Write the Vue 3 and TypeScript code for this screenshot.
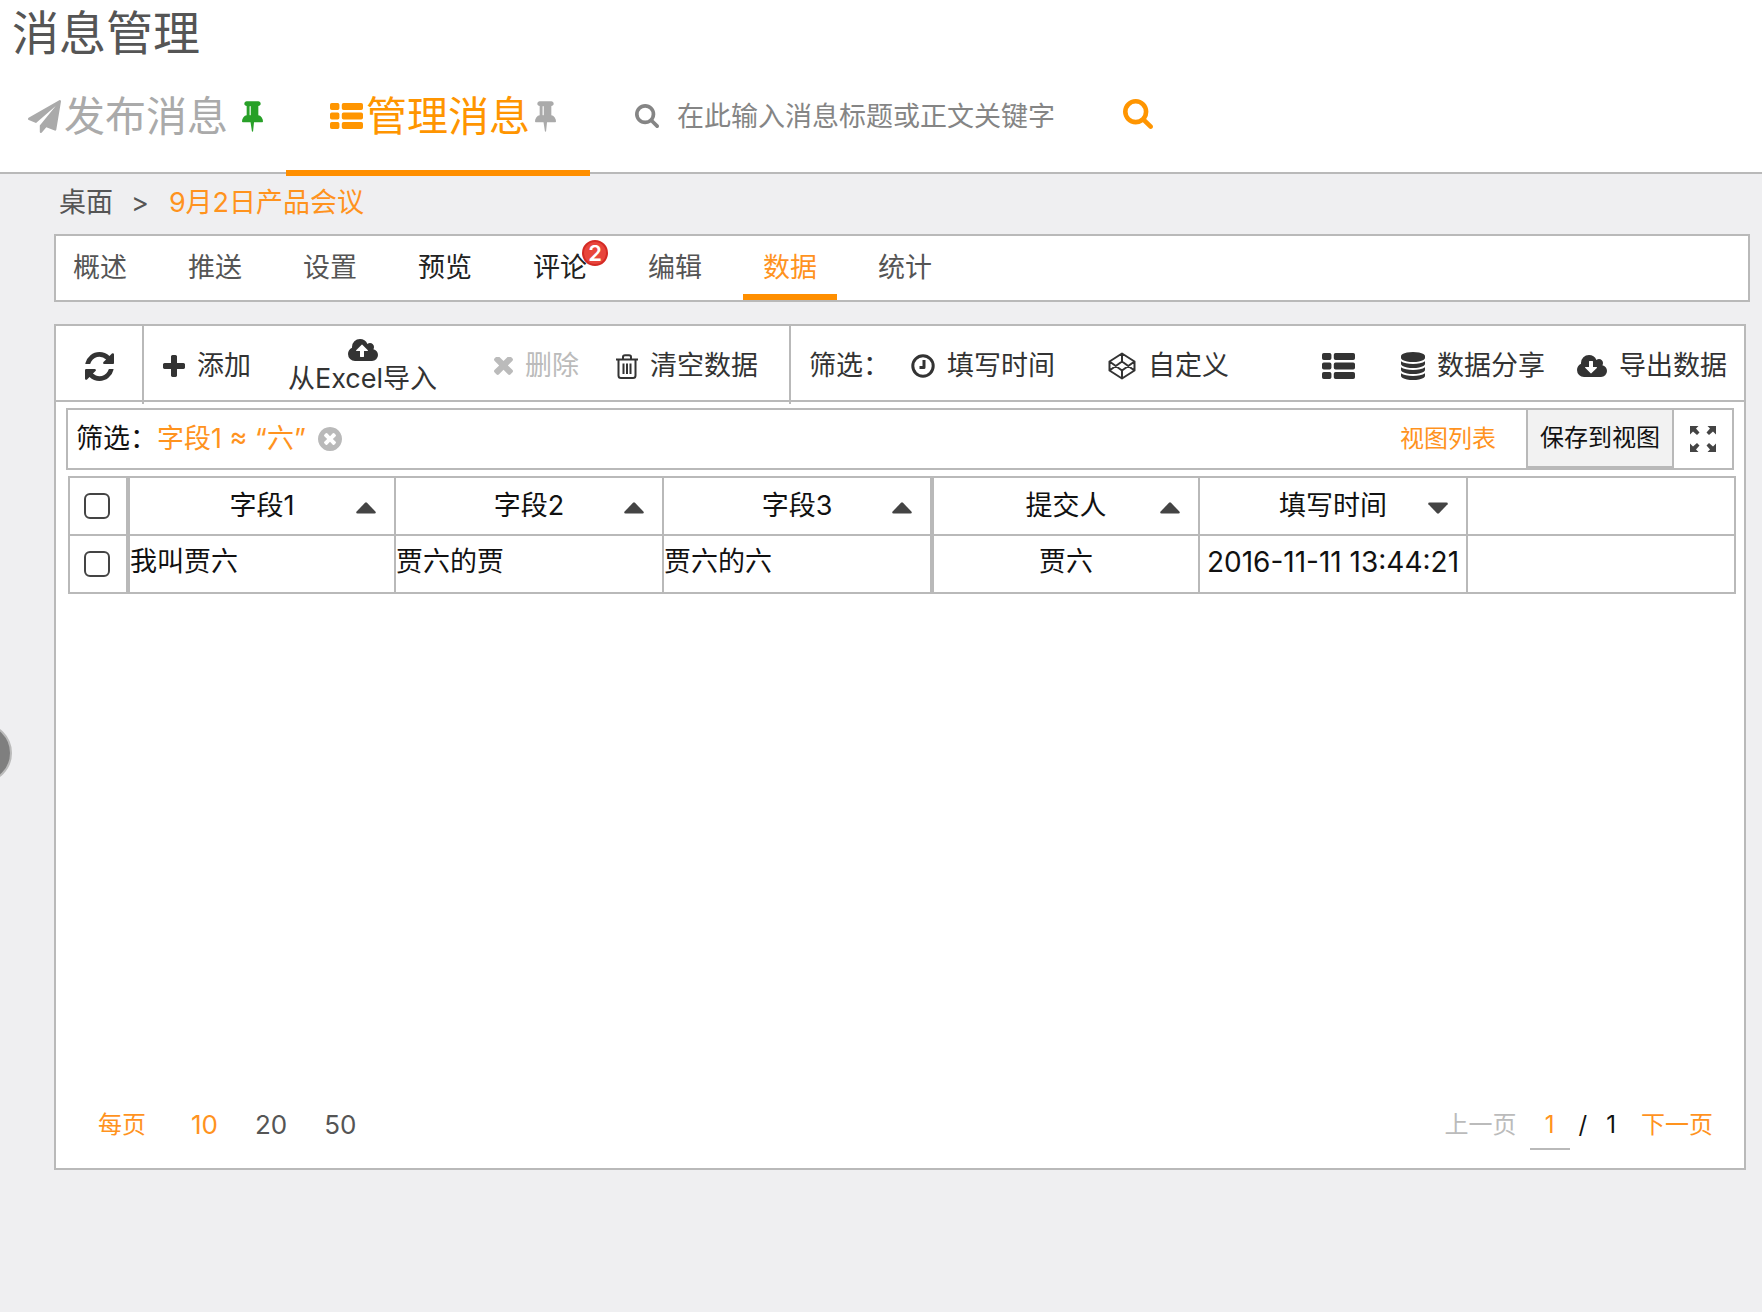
<script setup lang="ts">
import { h, ref, type FunctionalComponent } from 'vue'

interface Glyph {
  box: string
  d: string
  stroke?: number
}

const CLOUD =
  'M1856 1152q0 159-112.5 271.5t-271.5 112.5h-1088q-185 0-316.5-131.5t-131.5-316.5q0-130 70-240t188-165q-2-30-2-43 0-212 150-362t362-150q156 0 285.5 87t188.5 231q71-62 166-62 106 0 181 75t75 181q0 76-41 138 130 31 213.5 135.5t83.5 238.5z'

const glyphs: Record<string, Glyph> = {
  plane: {
    box: '0 0 1792 1792',
    d: 'M1764 11q33 24 27 64l-256 1536q-5 29-32 45-14 8-31 8-11 0-24-5l-453-185-242 295q-18 23-49 23-13 0-22-4-19-7-30.5-23.5t-11.5-36.5v-349l864-1059-1069 925-395-162q-37-14-40-55-2-40 32-59l1664-960q15-9 32-9 20 0 36 11z',
  },
  pin: {
    box: '320 128 1152 1664',
    d: 'M800 864v-448q0-14-9-23t-23-9-23 9-9 23v448q0 14 9 23t23 9 23-9 9-23zm672 352q0 26-19 45t-45 19h-429l-51 483q-2 12-10.5 20.5t-20.5 8.5h-1q-27 0-32-27l-76-485h-404q-26 0-45-19t-19-45q0-123 78.5-221.5t177.5-98.5v-512q-52 0-90-38t-38-90 38-90 90-38h640q52 0 90 38t38 90-38 90-90 38v512q99 0 177.5 98.5t78.5 221.5z',
  },
  list: {
    box: '0 128 1792 1408',
    d: 'M96 128h320a96 96 0 0 1 96 96v192a96 96 0 0 1-96 96H96a96 96 0 0 1-96-96V224a96 96 0 0 1 96-96zM96 640h320a96 96 0 0 1 96 96v192a96 96 0 0 1-96 96H96a96 96 0 0 1-96-96V736a96 96 0 0 1 96-96zM96 1152h320a96 96 0 0 1 96 96v192a96 96 0 0 1-96 96H96a96 96 0 0 1-96-96v-192a96 96 0 0 1 96-96zM736 128h960a96 96 0 0 1 96 96v192a96 96 0 0 1-96 96H736a96 96 0 0 1-96-96V224a96 96 0 0 1 96-96zM736 640h960a96 96 0 0 1 96 96v192a96 96 0 0 1-96 96H736a96 96 0 0 1-96-96V736a96 96 0 0 1 96-96zM736 1152h960a96 96 0 0 1 96 96v192a96 96 0 0 1-96 96H736a96 96 0 0 1-96-96v-192a96 96 0 0 1 96-96z',
  },
  search: {
    box: '64 128 1664 1664',
    d: 'M1216 832q0-185-131.5-316.5t-316.5-131.5-316.5 131.5-131.5 316.5 131.5 316.5 316.5 131.5 316.5-131.5 131.5-316.5zm512 832q0 52-38 90t-90 38q-54 0-90-38l-343-342q-179 124-399 124-143 0-273.5-55.5t-225-150-150-225-55.5-273.5 55.5-273.5 150-225 225-150 273.5-55.5 273.5 55.5 225 150 150 225 55.5 273.5q0 220-124 399l343 343q37 37 37 90z',
  },
  refresh: {
    box: '128 128 1536 1536',
    d: 'M1639 1056q0 5-1 7-64 268-268 434.5t-478 166.5q-146 0-282.5-55t-243.5-157l-129 129q-19 19-45 19t-45-19-19-45v-448q0-26 19-45t45-19h448q26 0 45 19t19 45-19 45l-137 137q71 66 161 102t187 36q134 0 250-65t186-179q11-17 53-117 8-23 30-23h192q13 0 22.5 9.5t9.5 22.5zm25-800v448q0 26-19 45t-45 19h-448q-26 0-45-19t-19-45 19-45l138-138q-148-137-349-137-134 0-250 65t-186 179q-11 17-53 117-8 23-30 23h-199q-13 0-22.5-9.5t-9.5-22.5v-7q65-268 270-434.5t480-166.5q146 0 284 55.5t245 156.5l130-129q19-19 45-19t45 19 19 45z',
  },
  plus: {
    box: '192 128 1408 1408',
    d: 'M1600 736v192q0 40-28 68t-68 28h-416v416q0 40-28 68t-68 28h-192q-40 0-68-28t-28-68v-416h-416q-40 0-68-28t-28-68v-192q0-40 28-68t68-28h416v-416q0-40 28-68t68-28h192q40 0 68 28t28 68v416h416q40 0 68 28t28 68z',
  },
  upload: {
    box: '-64 128 1920 1408',
    d: CLOUD + 'M1216 864q0-14-9-23l-352-352q-9-9-23-9t-23 9l-351 351q-10 12-10 24 0 14 9 23t23 9h224v352q0 13 9.5 22.5t22.5 9.5h192q13 0 22.5-9.5t9.5-22.5v-352h224q13 0 22.5-9.5t9.5-22.5z',
  },
  download: {
    box: '-64 128 1920 1408',
    d: CLOUD + 'M1216 928q0-14-9-23t-23-9h-224v-352q0-13-9.5-22.5t-22.5-9.5h-192q-13 0-22.5 9.5t-9.5 22.5v352h-224q-13 0-22.5 9.5t-9.5 22.5q0 14 9 23l352 352q9 9 23 9t23-9l351-351q10-12 10-24z',
  },
  times: {
    box: '302 434 1188 1188',
    d: 'M1490 1322q0 40-28 68l-136 136q-28 28-68 28t-68-28l-294-294-294 294q-28 28-68 28t-68-28l-136-136q-28-28-28-68t28-68l294-294-294-294q-28-28-28-68t28-68l136-136q28-28 68-28t68 28l294 294 294-294q28-28 68-28t68 28l136 136q28 28 28 68t-28 68l-294 294 294 294q28 28 28 68z',
  },
  remove: {
    box: '128 128 1536 1536',
    d: 'M1277 1122q0-26-19-45l-181-181 181-181q19-19 19-45 0-27-19-46l-90-90q-19-19-46-19-26 0-45 19l-181 181-181-181q-19-19-45-19-27 0-46 19l-90 90q-19 19-19 46 0 26 19 45l181 181-181 181q-19 19-19 45 0 27 19 46l90 90q19 19 46 19 26 0 45-19l181-181 181 181q19 19 45 19 27 0 46-19l90-90q19-19 19-46zm387-226q0 209-103 385.5t-279.5 279.5-385.5 103-385.5-103-279.5-279.5-103-385.5 103-385.5 279.5-279.5 385.5-103 385.5 103 279.5 279.5 103 385.5z',
  },
  database: {
    box: '128 0 1536 1792',
    d: 'M896 768q237 0 443-43t325-127v170q0 69-103 128t-280 93.5-385 34.5-385-34.5-280-93.5-103-128v-170q119 84 325 127t443 43zm0 768q237 0 443-43t325-127v170q0 69-103 128t-280 93.5-385 34.5-385-34.5-280-93.5-103-128v-170q119 84 325 127t443 43zm0-384q237 0 443-43t325-127v170q0 69-103 128t-280 93.5-385 34.5-385-34.5-280-93.5-103-128v-170q119 84 325 127t443 43zm0-1152q208 0 385 34.5t280 93.5 103 128v128q0 69-103 128t-280 93.5-385 34.5-385-34.5-280-93.5-103-128v-128q0-69 103-128t280-93.5 385-34.5z',
  },
  trash: {
    box: '0 0 22 25',
    stroke: 2,
    d: 'M0 5.5H22M7 5V3Q7 1.2 9 1.2H13Q15 1.2 15 3V5M2.5 5.5V21.5Q2.5 24 5 24H17Q19.500 24 19.500 21.500V5.500M7.500 9.500V20M11 9.500V20M14.500 9.500V20',
  },
  clock: {
    box: '0 0 24 24',
    stroke: 3,
    d: 'M12 1.8A10.200 10.200 0 1 1 12 22.200A10.200 10.200 0 1 1 12 1.800M13 6V13.500H8.500',
  },
  codepen: {
    box: '0 0 28 28',
    stroke: 2,
    d: 'M14 1.500L26.500 9.500V18.500L14 26.500L1.500 18.500V9.500ZM14 1.500V9.500M14 18.500V26.500M1.500 9.500L14 18.500L26.500 9.500M1.500 18.500L14 9.500L26.500 18.500',
  },
  expand: {
    box: '0 0 26 26',
    d: 'M0 0H8.500L6 2.500L9.500 6.500L7 9L3 5.500L0 8.500ZM26 0H17.500L20 2.500L16.500 6.500L19 9L23 5.500L26 8.500ZM0 26H8.500L6 23.500L9.500 19.500L7 17L3 20.500L0 17.500ZM26 26H17.500L20 23.500L16.500 19.500L19 17L23 20.500L26 17.500Z',
  },
  up: { box: '0 0 20 12', d: 'M9 .7Q10 0 11 .7L19.600 9.800Q20.300 11.400 18.500 11.500H1.500Q-.3 11.400 .4 9.800Z' },
  down: { box: '0 0 20 12', d: 'M9 11.300Q10 12 11 11.300L19.600 2.200Q20.300 .6 18.500 .5H1.500Q-.3 .6 .4 2.200Z' },
}

const Icon: FunctionalComponent<{ name: string }> = (props) => {
  const g = glyphs[props.name]
  return h('svg', { viewBox: g.box, 'aria-hidden': 'true' }, [
    h('path', {
      d: g.d,
      'fill-rule': 'evenodd',
      fill: g.stroke ? 'none' : 'currentColor',
      stroke: g.stroke ? 'currentColor' : 'none',
      'stroke-width': g.stroke ?? 0,
      'stroke-linejoin': 'round',
    }),
  ])
}
Icon.props = ['name']

interface Tab {
  label: string
  dark?: boolean
  badge?: number
}

const tabs: Tab[] = [
  { label: '概述' },
  { label: '推送' },
  { label: '设置' },
  { label: '预览', dark: true },
  { label: '评论', dark: true, badge: 2 },
  { label: '编辑' },
  { label: '数据' },
  { label: '统计' },
]
const activeTab = ref('数据')

const columns = [
  { label: '字段1', sort: 'up', cls: 'thick' },
  { label: '字段2', sort: 'up', cls: '' },
  { label: '字段3', sort: 'up', cls: '' },
  { label: '提交人', sort: 'up', cls: 'thick' },
  { label: '填写时间', sort: 'down', cls: 'time' },
]
const rows = [['我叫贾六', '贾六的贾', '贾六的六', '贾六', '2016-11-11 13:44:21']]

const pageSizes = [10, 20, 50]
const pageSize = ref(10)
const page = ref('1')
const keyword = ref('')
</script>

<template>
  <div class="page">
    <header class="top">
      <h1>消息管理</h1>
      <div class="nav">
        <a href="#" class="main-tab publish"><Icon name="plane" class="i-33" />发布消息<Icon name="pin" class="i-pin green" /></a>
        <a href="#" class="main-tab manage"><Icon name="list" class="i-list" />管理消息<Icon name="pin" class="i-pin grey" /></a>
        <form class="search" @submit.prevent>
          <label for="kw" aria-label="搜索"><Icon name="search" class="i-24" /></label>
          <input id="kw" v-model="keyword" type="text" placeholder="在此输入消息标题或正文关键字" />
          <button type="submit" aria-label="搜索" class="go"><Icon name="search" class="i-30" /></button>
        </form>
      </div>
    </header>

    <button class="handle" aria-label="展开侧栏"></button>

    <main>
      <nav class="crumbs">
        <a href="#">桌面</a><span class="sep">&gt;</span><a href="#" class="orange">9月2日产品会议</a>
      </nav>

      <nav class="tabs">
        <button
          v-for="t in tabs"
          :key="t.label"
          :class="{ dark: t.dark, active: t.label === activeTab }"
          @click="activeTab = t.label"
        >
          {{ t.label }}<span v-if="t.badge" class="badge">{{ t.badge }}</span>
        </button>
      </nav>

      <section class="panel">
        <div class="toolbar">
          <div class="group refresh">
            <button aria-label="刷新"><Icon name="refresh" class="i-29" /></button>
          </div>
          <div class="group actions">
            <button><Icon name="plus" class="i-22" />添加</button>
            <button class="stacked"><Icon name="upload" class="i-cloud" />从Excel导入</button>
            <button class="off" disabled><Icon name="times" class="i-19" />删除</button>
            <button><Icon name="trash" class="i-trash" />清空数据</button>
          </div>
          <div class="group filters">
            <span>筛选：</span>
            <button><Icon name="clock" class="i-24" />填写时间</button>
            <button class="custom"><Icon name="codepen" class="i-28" />自定义</button>
          </div>
          <div class="group exports">
            <button class="view" aria-label="列表视图"><Icon name="list" class="i-list" /></button>
            <button><Icon name="database" class="i-db" />数据分享</button>
            <button><Icon name="download" class="i-cloud" />导出数据</button>
          </div>
        </div>

        <div class="filterbar">
          <span>筛选：</span>
          <span class="orange term">字段1 ≈ “六”</span>
          <button class="clear" aria-label="移除筛选"><Icon name="remove" class="i-24" /></button>
          <a href="#" class="orange views">视图列表</a>
          <button class="save">保存到视图</button>
          <button class="full" aria-label="全屏"><Icon name="expand" class="i-26" /></button>
        </div>

        <div class="grid">
          <table>
            <colgroup>
              <col class="c-check" />
              <col v-for="c in columns" :key="c.label" />
              <col />
            </colgroup>
            <thead>
              <tr>
                <th class="check"><input type="checkbox" aria-label="全选" /></th>
                <th v-for="c in columns" :key="c.label" :class="c.cls">
                  <div class="head">
                    <span>{{ c.label }}</span>
                    <button :aria-label="'按' + c.label + '排序'"><Icon :name="c.sort" class="i-sort" /></button>
                  </div>
                </th>
                <th></th>
              </tr>
            </thead>
            <tbody>
              <tr v-for="(r, i) in rows" :key="i">
                <td class="check"><input type="checkbox" aria-label="选择此行" /></td>
                <td v-for="(cell, j) in r" :key="j" :class="[columns[j].cls, { mid: j > 2 }]">{{ cell }}</td>
                <td></td>
              </tr>
            </tbody>
          </table>
        </div>

        <footer class="pager">
          <span class="orange per">每页</span>
          <button v-for="s in pageSizes" :key="s" class="size" :class="{ orange: s === pageSize }" @click="pageSize = s">{{ s }}</button>
          <button class="prev" disabled>上一页</button>
          <input v-model="page" type="text" aria-label="页码" />
          <span class="slash">/</span>
          <span class="total">1</span>
          <button class="orange">下一页</button>
        </footer>
      </section>
    </main>
  </div>
</template>

<style>
body {
  margin: 0;
}
</style>

<style scoped>
.page {
  display: flex;
  flex-direction: column;
  min-height: 100vh;
  position: relative;
  overflow: hidden;
  background: #efeff1;
  color: #555;
  font-family: Inter, 'Noto Sans CJK SC', sans-serif;
  font-size: 27px;
  line-height: 40px;
}
.page * {
  box-sizing: border-box;
}
button {
  border: 0;
  padding: 0;
  background: none;
  font: inherit;
  color: inherit;
  cursor: pointer;
  white-space: nowrap;
}
input {
  font: inherit;
}
a {
  color: inherit;
  text-decoration: none;
}
svg {
  display: block;
  flex: none;
}
.orange {
  color: #ff931e;
}

.i-19 { width: 19px; height: 19px; }
.i-22 { width: 22px; height: 22px; }
.i-24 { width: 24px; height: 24px; }
.i-26 { width: 26px; height: 26px; }
.i-28 { width: 28px; height: 28px; }
.i-29 { width: 29px; height: 29px; }
.i-30 { width: 30px; height: 30px; }
.i-33 { width: 33px; height: 33px; }
.i-pin { width: 21px; height: 31px; }
.i-list { width: 33px; height: 26px; }
.i-cloud { width: 30px; height: 22px; }
.i-trash { width: 22px; height: 25px; }
.i-db { width: 24px; height: 28px; }
.i-sort { width: 20px; height: 12px; }

.top {
  background: #fff;
  border-bottom: 2px solid #b9b9b9;
}
h1 {
  margin: 0;
  padding: 0 0 2px 12px;
  font-size: 47px;
  font-weight: 400;
  line-height: 66px;
}
.nav {
  display: flex;
  height: 104px;
}
.main-tab {
  display: flex;
  align-items: center;
  height: 108px;
  padding-bottom: 6px;
  font-size: 41px;
  border-bottom: 6px solid transparent;
}
.publish {
  width: 286px;
  padding-left: 28px;
  gap: 3px;
  color: #aaa;
}
.manage {
  width: 304px;
  padding-left: 44px;
  gap: 3px;
  color: #ff9500;
  border-bottom-color: #ff8f00;
}
.green {
  margin-left: 11px;
  color: #28a028;
}
.grey {
  margin-left: 2px;
  color: #aaa;
}
.search {
  display: flex;
  align-items: center;
  flex: 1;
  height: 94px;
  padding-left: 45px;
  color: #858585;
}
.search input {
  width: 430px;
  margin-left: 18px;
  padding: 4px 0 0;
  border: 0;
  outline: 0;
  background: none;
}
.search input::placeholder {
  color: #858585;
  opacity: 1;
}
.search label {
  padding-top: 2px;
}
.go {
  margin-left: 16px;
  padding-bottom: 2px;
  color: #ff9500;
}

.handle {
  position: absolute;
  left: -48px;
  top: 723px;
  width: 60px;
  height: 60px;
  border: 2px solid #bbb;
  border-radius: 50%;
  background: #7f7f7f;
}

main {
  display: flex;
  flex: 1;
  flex-direction: column;
  padding: 0 16px 142px 54px;
}
.crumbs {
  display: flex;
  align-items: center;
  height: 60px;
  padding: 0 0 2px 5px;
}
.sep {
  margin: 0 20px 0 18px;
}

.tabs {
  display: flex;
  gap: 61px;
  height: 68px;
  margin-right: -4px;
  padding-left: 17px;
  border: 2px solid #b9b9b9;
  background: #fff;
}
.tabs button {
  position: relative;
}
.tabs .dark {
  color: #222;
}
.tabs .active {
  color: #ff931e;
}
.tabs .active::after {
  content: '';
  position: absolute;
  left: -20px;
  right: -20px;
  bottom: 0;
  height: 6px;
  background: #ff8f00;
}
.badge {
  position: absolute;
  left: 49px;
  top: 4px;
  width: 26px;
  height: 26px;
  border: 2px solid #d42a24;
  border-radius: 50%;
  background: #e8453c;
  color: #fff;
  font-size: 22px;
  font-weight: 600;
  line-height: 22px;
}

.panel {
  display: flex;
  flex: 1;
  flex-direction: column;
  margin-top: 22px;
  border: 2px solid #b9b9b9;
  background: #fff;
}
.toolbar {
  display: flex;
  border-bottom: 2px solid #b9b9b9;
  color: #333;
}
.group {
  display: flex;
  align-items: center;
  height: 78px;
  margin-bottom: -4px;
  padding-top: 2px;
}
.group button {
  display: flex;
  align-items: center;
  gap: 12px;
}
.refresh {
  width: 88px;
  justify-content: center;
  border-right: 2px solid #b9b9b9;
}
.actions {
  padding-left: 19px;
  padding-right: 31px;
  gap: 37px;
  border-right: 2px solid #b9b9b9;
}
.group .stacked {
  flex-direction: column;
  gap: 1px;
  margin-right: 20px;
  padding-top: 3px;
  line-height: 34px;
}
.group .off {
  color: #bbb;
  cursor: default;
}
.filters {
  padding-left: 18px;
  gap: 21px;
}
.custom {
  margin-left: 32px;
}
.exports {
  margin-left: auto;
  padding-right: 17px;
  gap: 32px;
}
.view {
  margin-right: 14px;
}

.filterbar {
  display: flex;
  align-items: center;
  height: 62px;
  margin: 6px 10px 0;
  padding-left: 8px;
  border: 2px solid #b9b9b9;
  color: #111;
}
.clear {
  margin-left: 12px;
  color: #b9b9b9;
}
.views {
  margin-left: auto;
  font-size: 24px;
}
.filterbar .save {
  height: 58px;
  margin-left: 30px;
  padding: 0 12px;
  border: solid #b9b9b9;
  border-width: 0 2px 2px;
  background: #f2f2f2;
  font-size: 24px;
}
.full {
  display: flex;
  align-items: center;
  justify-content: center;
  width: 58px;
  color: #444;
}

.grid {
  padding: 6px 8px 0 12px;
}
table {
  width: 100%;
  table-layout: fixed;
  border-collapse: separate;
  border-spacing: 0;
  border: solid #b9b9b9;
  border-width: 2px 2px 0 0;
  color: #111;
}
.c-check {
  width: 58px;
}
th,
td {
  height: 58px;
  padding: 0;
  border: solid #b9b9b9;
  border-width: 0 0 2px 2px;
  font-weight: 400;
  text-align: left;
  white-space: nowrap;
}
th.thick,
td.thick {
  border-left-width: 4px;
}
td {
  padding-bottom: 4px;
}
th.check,
td.check {
  padding: 0 2px 0 0;
}
td.time {
  font-size: 28px;
}
th,
td.mid {
  text-align: center;
}
.head {
  position: relative;
}
.head button {
  position: absolute;
  right: 18px;
  top: 16px;
}
.head svg {
  color: #444;
}
input[type='checkbox'] {
  appearance: none;
  display: block;
  width: 26px;
  height: 26px;
  margin: 0 auto;
  border: 2px solid #444;
  border-radius: 6px;
  background: #fff;
}

.pager {
  display: flex;
  align-items: center;
  margin-top: auto;
  padding: 0 31px 18px 42px;
  font-size: 24px;
}
.pager span,
.pager button,
.pager input {
  padding: 6px 0 0;
}
.per {
  margin-right: 8px;
}
.pager .size {
  margin-left: 37px;
  font-size: 26px;
}
.pager .prev {
  margin-left: auto;
  color: #bbb;
}
.pager input {
  width: 40px;
  height: 56px;
  margin-left: 13px;
  border: 0;
  border-bottom: 2px solid #b9b9b9;
  background: none;
  color: #ff931e;
  text-align: center;
}
.slash {
  margin-left: 9px;
  color: #111;
}
.total {
  margin: 0 25px 0 19px;
  color: #111;
}
</style>
